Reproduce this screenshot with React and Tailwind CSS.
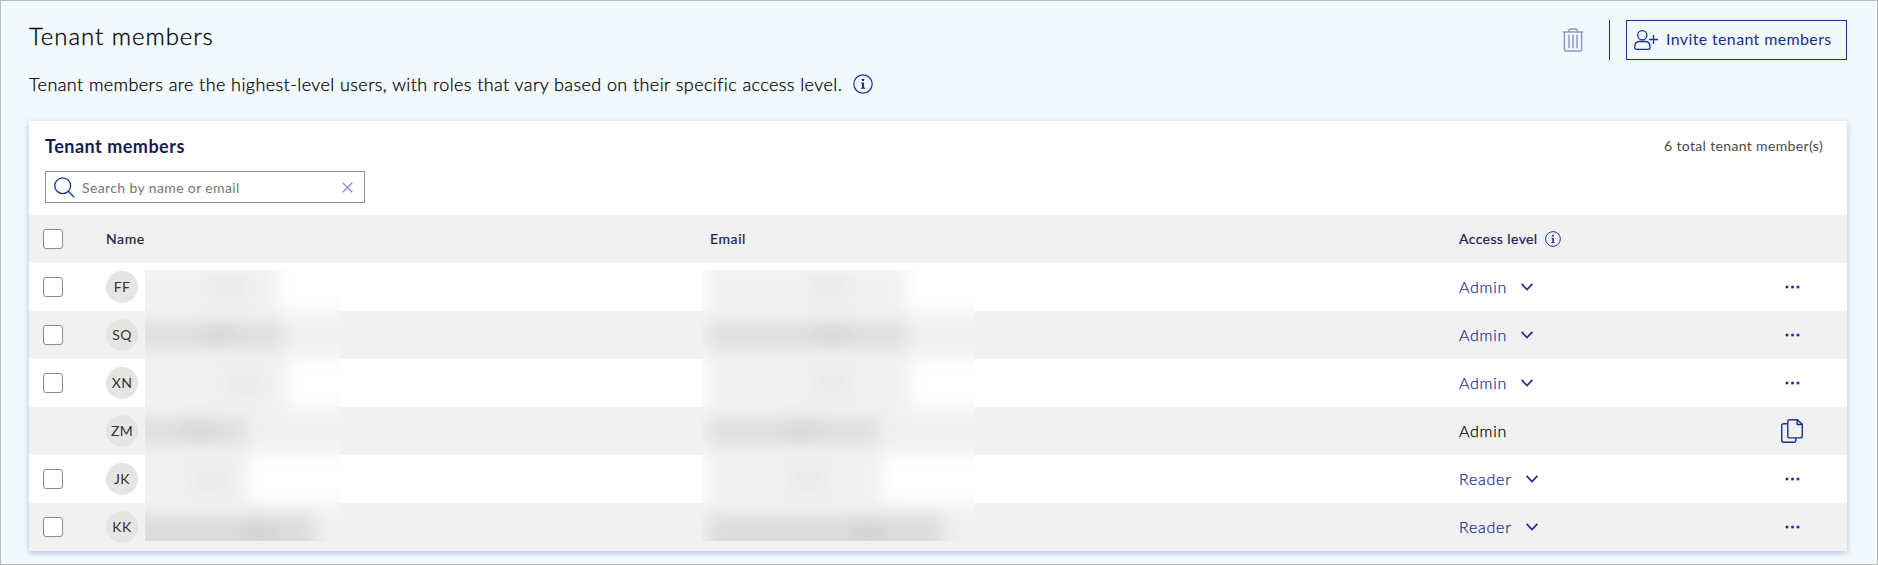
const members = [
  { initials: "FF", level: "Admin", menu: true },
  { initials: "SQ", level: "Admin", menu: true },
  { initials: "XN", level: "Admin", menu: true },
  { initials: "ZM", level: "Admin", menu: false },
  { initials: "JK", level: "Reader", menu: true },
  { initials: "KK", level: "Reader", menu: true },
];

// Widths (px) of the obscured text, and where its darkest spot lies.
const nameBars = [
  { start: 0, width: 134, peak: 90 },
  { start: 0, width: 139, peak: 80 },
  { start: 0, width: 143, peak: 104 },
  { start: 0, width: 103, peak: 60 },
  { start: 0, width: 103, peak: 70 },
  { start: 0, width: 170, peak: 120 },
];
const emailBars = [
  { start: 6, width: 198, peak: 124 },
  { start: 6, width: 200, peak: 126 },
  { start: 6, width: 202, peak: 126 },
  { start: 6, width: 172, peak: 96 },
  { start: 6, width: 174, peak: 102 },
  { start: 6, width: 236, peak: 162 },
];

function InfoIcon({ className }) {
  return (
    <svg className={className} viewBox="0 0 20 20" fill="none">
      <circle cx="10" cy="10" r="9.2" stroke="currentColor" strokeWidth="1.2" />
      <rect x="8.9" y="4.7" width="2.2" height="2.2" rx="0.5" fill="currentColor" />
      <path d="M7.8 8.4h3.3v5.4h1.3v1H7.7v-1H9V9.4H7.8z" fill="currentColor" />
    </svg>
  );
}

function TrashIcon() {
  return (
    <svg className="h-6 w-[22px] text-[#8d9bcb]" viewBox="0 0 22 24" fill="none" stroke="currentColor" strokeWidth="1.5">
      <path d="M0.8 4h20.4" />
      <path d="M6.6 3.9c0-2 .9-3 2.4-3h4c1.5 0 2.4 1 2.4 3" />
      <path d="M2.4 4v17.6c0 .9.6 1.5 1.5 1.5h14.2c.9 0 1.5-.6 1.5-1.5V4" />
      <path d="M7 6.8v13.4M11 6.8v13.4M15 6.8v13.4" />
    </svg>
  );
}

function InviteIcon() {
  return (
    <svg className="h-5 w-6" viewBox="0 0 24 20" fill="none" stroke="currentColor" strokeWidth="1.3">
      <circle cx="8.3" cy="5.3" r="4.6" />
      <path d="M0.7 17.2c0-3.7 1.6-5.7 4.6-5.7h6.1c3 0 4.6 2 4.6 5.7 0 1.3-.7 2.1-2 2.1H2.7c-1.3 0-2-.8-2-2.1z" />
      <path d="M15 9.5h9M19.5 5v9" />
    </svg>
  );
}

function SearchIcon() {
  return (
    <svg className="h-[21px] w-[21px]" viewBox="0 0 21 21" fill="none" stroke="currentColor" strokeWidth="1.3">
      <circle cx="8.7" cy="8.7" r="7.9" />
      <path d="M14.3 14.3l5.9 5.9" />
    </svg>
  );
}

function CopyIcon() {
  return (
    <svg className="h-6 w-[22px]" viewBox="0 0 22 24" fill="none" stroke="currentColor" strokeWidth="1.4">
      <path d="M7 4.7H2.7c-1.2 0-2 .8-2 2v14.6c0 1.2.8 2 2 2h10.1c1.2 0 2-.8 2-2V19" />
      <path d="M8.7.7h7.6l5 4.7v11.5c0 1.2-.8 2-2 2H8.7c-1.2 0-1.9-.8-1.9-2V2.7c0-1.2.7-2 1.9-2z" />
      <path d="M16.2.8v4.7h5" />
    </svg>
  );
}

function Checkbox() {
  return <div className="h-5 w-5 rounded-[3px] border border-[#8b8b8b] bg-white" />;
}

function Smudge({ bars, className }) {
  return (
    <div className={`absolute top-[149px] h-[271px] overflow-hidden bg-white ${className}`}>
      <div className="-mx-10 -mt-[47px] bg-white pt-10 blur-[9px]">
        {bars.map((bar, i) => (
          <div key={i} className={`flex h-12 items-center ${i % 2 ? "bg-[#f1f1f1]" : "bg-white"}`}>
            <div
              className={`flex items-center ${
                i === 5 ? "mt-3 h-9 bg-[#dcdcdc]" : i % 2 ? "h-[26px] bg-[#dedede]" : "h-full bg-[#f1f1f1]"
              }`}
              style={{
                marginLeft: bar.start ? bar.start + 40 : 0,
                width: bar.start ? bar.width : bar.width + 40,
                paddingLeft: bar.start ? bar.peak - 20 : bar.peak + 16,
              }}
            >
              <div className="h-6 w-9 bg-black/[0.035]" />
            </div>
          </div>
        ))}
        <div className="h-10 bg-[#e4e4e4]" />
      </div>
    </div>
  );
}

export default function App() {
  return (
    <div className="h-[565px] w-[1878px] overflow-hidden border border-[#bdbdbd] bg-[#f1f9fd] pl-7 pr-[30px] font-['Lato',sans-serif] text-[#1f1f1f]">
      <header className="flex justify-between pt-[19px]">
        <div>
          <h1 className="mt-px text-[24px] leading-[30px] font-light tracking-[0.95px] text-black [-webkit-text-stroke:0.3px]">
            Tenant members
          </h1>
          <div className="mt-[21px] flex items-center">
            <p className="text-[18px] leading-[24px] font-light tracking-[0.41px] whitespace-nowrap text-black [-webkit-text-stroke:0.25px]">
              Tenant members are the highest-level users, with roles that vary based on their specific access level.
            </p>
            <InfoIcon className="ml-[11px] h-5 w-5 text-[#1b2f8c]" />
          </div>
        </div>
        <div className="flex h-10 items-center text-[#1b2f8c]">
          <TrashIcon />
          <div className="ml-[25px] h-10 w-px bg-[#1b2f8c]" />
          <button className="ml-4 flex h-10 w-[221px] items-center border border-[#1b2f8c] pl-[7px]">
            <InviteIcon />
            <span className="ml-2 pb-[2px] text-[16px] tracking-[0.36px] whitespace-nowrap">Invite tenant members</span>
          </button>
        </div>
      </header>

      <section className="relative mt-[25px] h-[430px] bg-white shadow-[0_2px_6px_rgba(27,50,100,0.28)]">
        <div className="h-[94px] px-4 pt-[14px]">
          <div className="flex items-center justify-between pr-2">
            <h2 className="text-[18px] leading-[22px] font-bold tracking-[0.5px] text-[#141e4f]">Tenant members</h2>
            <span className="text-[14px] leading-[22px] tracking-[0.35px] text-[#4a4a4a]">6 total tenant member(s)</span>
          </div>
          <div className="mt-[14px] flex h-8 w-[320px] items-center border border-[#8f8f8f] pl-2 text-[#1b2f8c]">
            <SearchIcon />
            <span className="ml-[7px] flex-1 text-[14px] tracking-[0.38px] text-[#757575]">Search by name or email</span>
            <svg className="mr-[11px] h-[11px] w-[11px] text-[#8a98cb]" viewBox="0 0 11 11" fill="none" stroke="currentColor" strokeWidth="1.5">
              <path d="M0.7 0.7l9.6 9.6M10.3 0.7L0.7 10.3" />
            </svg>
          </div>
        </div>

        <div className="grid h-12 grid-cols-[77px_604px_749px_1fr] items-center bg-[#f1f1f1] text-[14px] text-[#141e4f]">
          <div className="pl-[14px]">
            <Checkbox />
          </div>
          <span className="pb-[2px] tracking-[0.6px] [-webkit-text-stroke:0.2px]">Name</span>
          <span className="pb-[2px] tracking-[0.6px] [-webkit-text-stroke:0.2px]">Email</span>
          <span className="flex items-center tracking-[0.4px]">
            <span className="pb-[2px] [-webkit-text-stroke:0.2px]">Access level</span>
            <InfoIcon className="ml-[7px] h-4 w-4 text-[#1b2f8c]" />
          </span>
        </div>

        {members.map((m, i) => (
          <div
            key={m.initials}
            className={`grid h-12 grid-cols-[77px_1353px_322px_1fr] items-center ${i % 2 ? "bg-[#f1f1f1]" : "bg-white"}`}
          >
            <div className="pl-[14px]">{m.menu && <Checkbox />}</div>
            <div className="flex h-8 w-8 items-center justify-center rounded-full bg-[#e5e5e3] pb-[2px] text-[14px] tracking-[0.4px] text-[#333333]">
              {m.initials}
            </div>
            <div className={`flex items-center text-[16px] font-light ${m.menu ? "text-[#1b2f8c]" : "text-black"}`}>
              <span className="pb-px tracking-[0.75px] [-webkit-text-stroke:0.25px]">{m.level}</span>
              {m.menu && (
                <svg className="ml-[14px] h-2 w-3" viewBox="0 0 12 8" fill="none" stroke="currentColor" strokeWidth="1.7">
                  <path d="M0.6 0.9L6 6.5l5.4-5.6" />
                </svg>
              )}
            </div>
            <div className="flex w-[22px] justify-center text-[#1b2f8c]">
              {m.menu ? (
                <svg className="h-1 w-[15px]" viewBox="0 0 15 4" fill="currentColor">
                  <circle cx="2" cy="2" r="1.5" />
                  <circle cx="7.5" cy="2" r="1.5" />
                  <circle cx="13" cy="2" r="1.5" />
                </svg>
              ) : (
                <CopyIcon />
              )}
            </div>
          </div>
        ))}

        <Smudge bars={nameBars} className="left-[116px] w-[195px]" />
        <Smudge bars={emailBars} className="left-[673px] w-[272px]" />
      </section>
    </div>
  );
}
